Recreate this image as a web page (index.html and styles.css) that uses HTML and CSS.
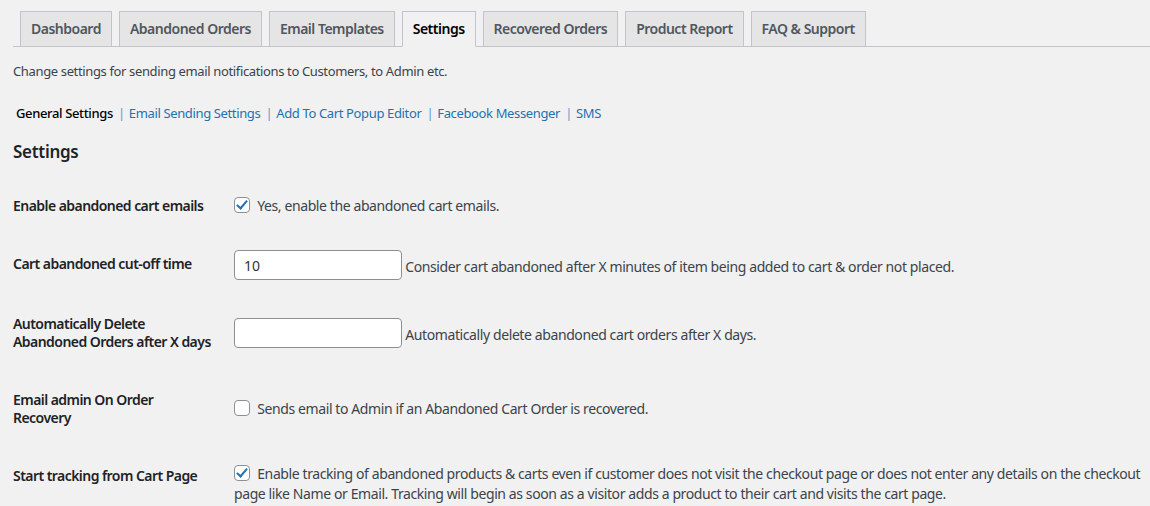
FILE: index.html
```html
<!DOCTYPE html>
<html lang="en">
<head>
    <meta charset="UTF-8">
    <meta name="viewport" content="width=device-width, initial-scale=1.0">
    <title>Abandoned Cart Settings</title>
    <link rel="stylesheet" href="styles.css">
</head>
<body>

<div class="wrap">
    <nav class="nav-tab-wrapper">
        <a href="#" class="nav-tab">Dashboard</a>
        <a href="#" class="nav-tab">Abandoned Orders</a>
        <a href="#" class="nav-tab">Email Templates</a>
        <a href="#" class="nav-tab nav-tab-active">Settings</a>
        <a href="#" class="nav-tab">Recovered Orders</a>
        <a href="#" class="nav-tab">Product Report</a>
        <a href="#" class="nav-tab">FAQ &amp; Support</a>
    </nav>

    <p class="intro">Change settings for sending email notifications to Customers, to Admin etc.</p>

    <ul class="subsubsub">
        <li><span class="current">General Settings</span> <span class="sep">|</span></li>
        <li><a href="#">Email Sending Settings</a> <span class="sep">|</span></li>
        <li><a href="#">Add To Cart Popup Editor</a> <span class="sep">|</span></li>
        <li><a href="#">Facebook Messenger</a> <span class="sep">|</span></li>
        <li><a href="#">SMS</a></li>
    </ul>

    <h2 class="section-title">Settings</h2>

    <table class="form-table">
        <tr>
            <th>Enable abandoned cart emails</th>
            <td>
                <label><input type="checkbox" checked> Yes, enable the abandoned cart emails.</label>
            </td>
        </tr>
        <tr>
            <th>Cart abandoned cut-off time</th>
            <td>
                <input type="text" class="regular-text" value="10">
                <span class="description">Consider cart abandoned after X minutes of item being added to cart &amp; order not placed.</span>
            </td>
        </tr>
        <tr>
            <th class="nowrap">Automatically Delete<br>Abandoned Orders after X days</th>
            <td>
                <input type="text" class="regular-text" value="">
                <span class="description">Automatically delete abandoned cart orders after X days.</span>
            </td>
        </tr>
        <tr>
            <th>Email admin On Order <br>Recovery</th>
            <td>
                <label><input type="checkbox"> Sends email to Admin if an Abandoned Cart Order is recovered.</label>
            </td>
        </tr>
        <tr>
            <th>Start tracking from Cart Page</th>
            <td class="wide">
                <label class="multi"><input type="checkbox" checked> Enable tracking of abandoned products &amp; carts even if customer does not visit the checkout page or does not enter any details on the checkout<br>page like Name or Email. Tracking will begin as soon as a visitor adds a product to their cart and visits the cart page.</label>
            </td>
        </tr>
    </table>
</div>

</body>
</html>
```

FILE: styles.css
```css
body {
    margin: 0;
    background-color: #f1f1f1;
    color: #3c434a;
    font-family: "Noto Sans", "Open Sans", sans-serif;
    font-size: 13px;
    letter-spacing: -0.36px;
}
.wrap {
    padding: 0 0 0 13px;
}

/* tabs */
.nav-tab-wrapper {
    display: flex;
    padding-top: 11px;
    border-bottom: 1px solid #c3c4c7;
}
.nav-tab {
    margin-left: 7px;
    margin-bottom: -1px;
    padding: 5px 10px;
    font-size: 14px;
    line-height: 24px;
    font-weight: 600;
    letter-spacing: -0.5px;
    color: #50575e;
    text-decoration: none;
    background-color: #e5e5e5;
    border: 1px solid #c3c4c7;
}
.nav-tab-active {
    color: #000;
    background-color: #f1f1f1;
    border-bottom-color: #f1f1f1;
}

.intro {
    margin: 14px 0 0;
    line-height: 20px;
}

/* sub links */
.subsubsub {
    list-style: none;
    margin: 22px 0 0;
    padding: 0 0 0 3px;
    line-height: 20px;
    display: flex;
    gap: 4px;
}
.subsubsub a {
    color: #2271b1;
    text-decoration: none;
}
.subsubsub .current {
    color: #000;
    font-weight: 500;
}
.subsubsub .sep {
    color: #5b9bd0;
    margin-left: 2px;
}

.section-title {
    margin: 17px 0 0;
    font-size: 17px;
    line-height: 24px;
    font-weight: 600;
    letter-spacing: -0.3px;
    color: #1d2327;
}

/* settings table */
.form-table {
    border-collapse: collapse;
    margin-top: 13px;
    width: 100%;
}
.form-table th {
    width: 200px;
    padding: 20px 10px 20px 0;
    text-align: left;
    vertical-align: top;
    font-size: 14px;
    line-height: 18px;
    font-weight: 600;
    letter-spacing: -0.55px;
    color: #1d2327;
}
.form-table th.nowrap {
    white-space: nowrap;
}
.form-table td {
    padding: 15px 0 15px 11px;
    vertical-align: middle;
    font-size: 14px;
    line-height: 18px;
    letter-spacing: -0.4px;
}
.form-table td.wide {
    padding-top: 17px;
}
.form-table label.multi {
    line-height: 20px;
}
.form-table .description {
    position: relative;
    top: 3px;
}

input[type="text"] {
    box-sizing: border-box;
    width: 168px;
    height: 30px;
    padding: 0 9px;
    margin: 0;
    font-family: inherit;
    font-size: 14px;
    color: #2c3338;
    background-color: #fff;
    border: 1px solid #8c8f94;
    border-radius: 4px;
    vertical-align: middle;
}

input[type="checkbox"] {
    appearance: none;
    box-sizing: border-box;
    position: relative;
    width: 16px;
    height: 16px;
    margin: -4px 4px 0 0;
    background-color: #fff;
    border: 1px solid #8c8f94;
    border-radius: 4px;
    vertical-align: middle;
}
input[type="checkbox"]:checked::before {
    content: "";
    position: absolute;
    left: 4px;
    top: 0;
    width: 4px;
    height: 9px;
    border: solid #2271b1;
    border-width: 0 2.5px 2.5px 0;
    transform: rotate(40deg);
}
```
